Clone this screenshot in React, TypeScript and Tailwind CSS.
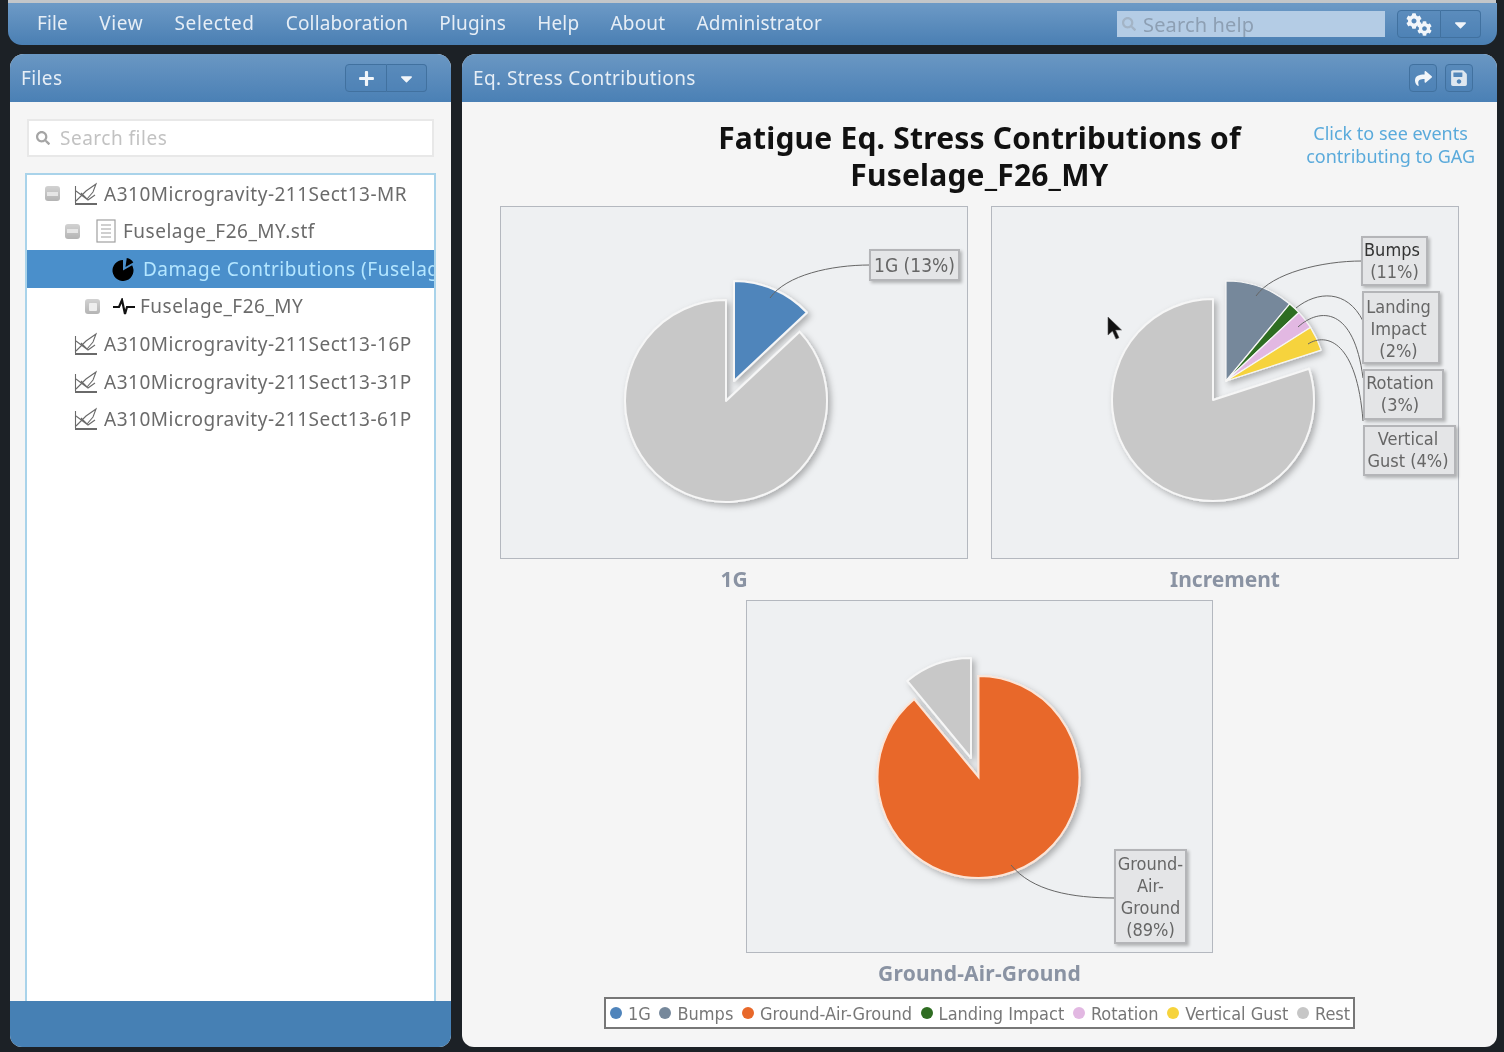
import React from "react";
import { FaCaretDown, FaCog, FaPlus, FaSave, FaSearch, FaShare } from "react-icons/fa";

function slice(cx: number, cy: number, r: number, a0: number, a1: number) {
  const p = (a: number) => {
    const t = (a * Math.PI) / 180;
    return `${(cx + r * Math.sin(t)).toFixed(2)} ${(cy - r * Math.cos(t)).toFixed(2)}`;
  };
  return `M${cx} ${cy}L${p(a0)}A${r} ${r} 0 ${a1 - a0 > 180 ? 1 : 0} 1 ${p(a1)}Z`;
}

const ChartIcon = () => (
  <svg width="24" height="24" viewBox="0 0 24 24" fill="none" stroke="#6a6a6a" strokeWidth="1.1" className="shrink-0">
    <path d="M1.500 4v17" />
    <path d="M1 22h22" strokeWidth="2" />
    <path d="M2 9l12 9 7-5M2 19l10-10 10-7-3 8-6 7-6-6" />
  </svg>
);

const DocIcon = () => (
  <svg width="20" height="24" viewBox="0 0 20 24" fill="none" stroke="#a0a0a0" strokeWidth="1.2" className="shrink-0">
    <rect x="1" y="1" width="18" height="22" />
    <path d="M5 6h10M5 10h10M5 14h10M5 18h10" />
  </svg>
);

const PulseIcon = () => (
  <svg width="22" height="18" viewBox="0 0 22 18" fill="none" stroke="#111" strokeWidth="2.2" className="shrink-0">
    <path d="M0 9h6l3-7 3 14 2-7h8" />
  </svg>
);

const PieIcon = () => (
  <svg width="23" height="24" viewBox="0 0 23 24" className="shrink-0">
    <path d={slice(11, 13.500, 10.500, 60, 360)} fill="#000" />
    <path d={slice(13.500, 10, 9, 8, 60)} fill="#000" />
  </svg>
);

const Expander = ({ plus }: { plus?: boolean }) => (
  <span className="w-[15px] h-[15px] rounded-[3px] bg-gradient-to-b from-[#d2d2d2] to-[#b4b4b4] flex items-center justify-center shrink-0">
    <span className={plus ? "w-[8px] h-[8px] bg-[#eeeeee] rounded-[1px]" : "w-[11px] h-[4px] bg-[#e6e6e6]"} />
  </span>
);

const rows = [
  { cls: "pl-[18px]", box: true, ic: "chart", gap: "gap-[14px]", text: "A310Microgravity-211Sect13-MR", tc: "-ml-[8px]" },
  { cls: "pl-[38px]", box: true, ic: "doc", gap: "gap-[16px]", text: "Fuselage_F26_MY.stf", tc: "-ml-[9px]" },
  { cls: "pl-[85px]", ic: "pie", gap: "", text: "Damage Contributions (Fuselage_F26_MY)", sel: true, tc: "ml-[8px]" },
  { cls: "pl-[58px]", box: true, plus: true, ic: "pulse", gap: "gap-[13px]", text: "Fuselage_F26_MY", tc: "-ml-[8px]" },
  { cls: "pl-[47px]", ic: "chart", gap: "", text: "A310Microgravity-211Sect13-16P", tc: "ml-[6px]" },
  { cls: "pl-[47px]", ic: "chart", gap: "", text: "A310Microgravity-211Sect13-31P", tc: "ml-[6px]" },
  { cls: "pl-[47px]", ic: "chart", gap: "", text: "A310Microgravity-211Sect13-61P", tc: "ml-[6px]" },
];

const headerBtn = "border border-[#41719f] bg-[#4a7fb3]/40 flex items-center justify-center text-[#f2f6fa]";

const Label = ({ cls, children }: { cls: string; children: React.ReactNode }) => (
  <div className={`absolute bg-[#e4e5e7] border-2 border-[#b4b5b8] shadow-[2px_2px_3px_rgba(0,0,0,0.25)] text-center text-[#666] font-['DejaVu_Sans',sans-serif] [font-stretch:condensed] text-[18px] leading-[22px] whitespace-nowrap overflow-hidden ${cls}`}>
    {children}
  </div>
);

const Pie = ({ children }: { children: React.ReactNode }) => (
  <svg className="absolute inset-0" width="100%" height="100%" fill="none">
    <defs>
      <filter id="sh" x="-20%" y="-20%" width="140%" height="140%">
        <feDropShadow dx="3" dy="3" stdDeviation="3" floodColor="#000" floodOpacity="0.28" />
      </filter>
    </defs>
    {children}
  </svg>
);

const s = { stroke: "#f6f6f6", strokeWidth: 2, strokeLinejoin: "round" as const };
const thin = { stroke: "#f6f6f6", strokeWidth: 1.2, strokeLinejoin: "round" as const };
const wire = { stroke: "#666", strokeWidth: 1, fill: "none" };

const legend = [
  ["#4f84bb", "1G"],
  ["#76889b", "Bumps"],
  ["#e8682a", "Ground-Air-Ground"],
  ["#2f6d22", "Landing Impact"],
  ["#e2b8e2", "Rotation"],
  ["#f6d33c", "Vertical Gust"],
  ["#c6c6c6", "Rest"],
];

const menu = [
  { t: "File", c: "" },
  { t: "View", c: "tracking-[0.6px]" },
  { t: "Selected", c: "tracking-[0.6px]" },
  { t: "Collaboration", c: "" },
  { t: "Plugins", c: "" },
  { t: "Help", c: "" },
  { t: "About", c: "" },
  { t: "Administrator", c: "" },
];

export default function App() {
  return (
    <div className="w-[1504px] h-[1052px] overflow-hidden bg-[#1c2126] flex flex-col font-['Noto_Sans',sans-serif] blur-[0.7px]">
      <div className="mx-[8px] h-[3px] shrink-0 bg-[#c3c6c9]" />
      <header className="mx-[8px] w-[1489px] h-[42px] shrink-0 rounded-b-[14px] bg-gradient-to-b from-[#6d9ac6] to-[#4a7fb3] flex items-center pl-[29px] pr-[16px] text-[19px] tracking-[0.15px] text-[#e6eef6]">
        <nav className="flex gap-[31.3px] pb-[2px]">
          {menu.map((m) => (
            <span key={m.t} className={m.c}>{m.t}</span>
          ))}
        </nav>
        <div className="ml-auto w-[268px] h-[26px] bg-[#b4cce5] flex items-center pl-[5px] gap-[7px] text-[#8d9fb3]">
          <FaSearch size={14} className="text-[#a3b4c6]" />
          <span className="text-[20px] pt-[1px]">Search help</span>
        </div>
        <div className="ml-[12px] flex h-[28px]">
          <span className={`${headerBtn} w-[44px] rounded-l-[4px]`}>
            <FaCog size={16} className="-mt-[6px]" />
            <FaCog size={15} className="-ml-[5px] mt-[9px]" />
          </span>
          <span className={`${headerBtn} w-[40px] rounded-r-[4px] border-l-0`}><FaCaretDown size={19} /></span>
        </div>
      </header>

      <main className="mt-[9px] ml-[10px] flex gap-[11px] h-[993px]">
        <section className="w-[441px] flex flex-col rounded-t-[14px] rounded-b-[12px] overflow-hidden bg-[#f5f5f5]">
          <div className="h-[48px] shrink-0 bg-gradient-to-b from-[#6a97c3] to-[#4a80b5] flex items-center pl-[11px] pr-[24px] text-[19px] tracking-[0.4px] text-[#e6eef6]">
            <span>Files</span>
            <div className="ml-auto flex h-[28px]">
              <span className={`${headerBtn} w-[42px] rounded-l-[4px]`}><FaPlus size={17} /></span>
              <span className={`${headerBtn} w-[40px] rounded-r-[4px] border-l-0`}><FaCaretDown size={19} /></span>
            </div>
          </div>
          <div className="flex-1 min-h-0 px-[15px] pt-[17px] flex flex-col">
            <div className="mx-[2px] h-[38px] shrink-0 bg-white border-2 border-[#e8e8e8] flex items-center pl-[7px] gap-[10px] text-[19px] tracking-[0.5px] text-[#c2c2c2]">
              <FaSearch size={14} className="text-[#a5a5a5]" />
              <span>Search files</span>
            </div>
            <div className="mt-[16px] flex-1 min-h-0 border-x-[2px] border-t-[2px] border-[#a9d3ea] bg-white overflow-hidden">
              {rows.map((r) => (
                <div key={r.text} className={`h-[37.6px] flex items-center whitespace-nowrap overflow-hidden text-[19px] tracking-[0.5px] ${r.cls} ${r.gap} ${r.sel ? "bg-[#4a8fcb] text-[#b4e6ff]" : "text-[#6b6b6b]"}`}>
                  {r.box && <Expander plus={r.plus} />}
                  {r.ic === "chart" && <ChartIcon />}
                  {r.ic === "doc" && <DocIcon />}
                  {r.ic === "pulse" && <PulseIcon />}
                  {r.ic === "pie" && <PieIcon />}
                  <span className={r.tc}>{r.text}</span>
                </div>
              ))}
            </div>
          </div>
          <div className="h-[46px] shrink-0 bg-[#4680b4]" />
        </section>

        <section className="w-[1035px] flex flex-col rounded-t-[14px] rounded-b-[12px] overflow-hidden bg-[#f5f5f5]">
          <div className="h-[48px] shrink-0 bg-gradient-to-b from-[#6a97c3] to-[#4a80b5] flex items-center pl-[11px] pr-[24px] text-[19px] text-[#e6eef6]">
            <span className="tracking-[0.4px] pt-[1px]">Eq. Stress Contributions</span>
            <div className="ml-auto flex gap-[8px] h-[28px]">
              <span className={`${headerBtn} w-[28px] rounded-[4px]`}><FaShare size={17} /></span>
              <span className={`${headerBtn} w-[28px] rounded-[4px]`}><FaSave size={18} className="text-[#dfe7ef]" /></span>
            </div>
          </div>

          <div className="flex-1 min-h-0 flex flex-col items-center">
            <div className="w-full h-[104px] shrink-0 grid grid-cols-[1fr_auto_1fr]">
              <div />
              <h1 className="pt-[18px] text-center text-[30px] leading-[36.5px] font-bold tracking-[0.2px] text-[#111]">
                Fatigue Eq. Stress Contributions of<br />Fuselage_F26_MY
              </h1>
              <div className="pt-[20px] pr-[22px] flex justify-end">
                <a className="text-center text-[18px] leading-[23px] text-[#5aaadb]">Click to see events<br />contributing to GAG</a>
              </div>
            </div>

            <div className="flex gap-[23px]">
              <div className="w-[468px] flex flex-col">
                <div className="relative h-[353px] bg-[#eef0f2] border border-[#b4b8bf]">
                  <Pie>
                    <g filter="url(#sh)">
                      <path d={slice(225, 194, 101, 46.8, 360)} fill="#c8c8c8" {...s} />
                      <path d={slice(233, 174, 100, 0, 46.8)} fill="#5085bb" {...s} />
                    </g>
                    <path d="M269 91C285 68 330 58 369 58" {...wire} />
                  </Pie>
                  <Label cls="left-[368px] top-[42px] w-[91px] h-[32px] text-[19px] leading-[28px]">1G (13%)</Label>
                </div>
                <div className="h-[41px] flex items-center justify-center text-[21px] font-bold text-[#8a93a3]">1G</div>
              </div>
              <div className="w-[468px] flex flex-col">
                <div className="relative h-[353px] bg-[#eef0f2] border border-[#b4b8bf]">
                  <Pie>
                    <g filter="url(#sh)">
                      <path d={slice(221, 193, 101, 72, 360)} fill="#c8c8c8" {...s} />
                      <path d={slice(234, 174, 100, 0, 39.6)} fill="#76889b" {...thin} />
                      <path d={slice(234, 174, 100, 39.6, 46.8)} fill="#2f6d22" {...thin} />
                      <path d={slice(234, 174, 100, 46.8, 57.6)} fill="#e2b8e2" {...thin} />
                      <path d={slice(234, 174, 100, 57.6, 72)} fill="#f6d33c" {...thin} />
                    </g>
                    <path d="M264 89C280 66 330 54 370 54" {...wire} />
                    <path d="M304 101C325 84 355 82 371 114" {...wire} />
                    <path d="M306 120C328 100 362 100 371 171" {...wire} />
                    <path d="M316 137C335 125 365 135 371 214" {...wire} />
                  </Pie>
                  <Label cls="left-[369px] top-[29px] w-[67px] h-[50px] pt-[1px]"><span className="block text-left pl-[1px] text-[#333]">Bumps</span>(11%)</Label>
                  <Label cls="left-[370px] top-[84px] w-[78px] h-[73px] pt-[3px] pr-[5px]">Landing<br />Impact<br />(2%)</Label>
                  <Label cls="left-[371px] top-[162px] w-[81px] h-[51px] pt-[1px] pr-[7px]">Rotation<br />(3%)</Label>
                  <Label cls="left-[371px] top-[218px] w-[93px] h-[51px] pt-[1px] pr-[3px]">Vertical<br />Gust (4%)</Label>
                  <svg className="absolute left-[115px] top-[109px]" width="16" height="24" viewBox="0 0 16 24">
                    <path d="M1 1v18l4.5-4 3.5 8 3-1.300-3.500-7.700h6z" fill="#111" stroke="#555" strokeWidth="0.6" />
                  </svg>
                </div>
                <div className="h-[41px] flex items-center justify-center text-[21px] font-bold text-[#8a93a3]">Increment</div>
              </div>
            </div>

            <div className="w-[467px] flex flex-col">
              <div className="relative h-[353px] bg-[#eef0f2] border border-[#b4b8bf]">
                <Pie>
                  <g filter="url(#sh)">
                    <path d={slice(231.5, 176, 101, 0, 320.4)} fill="#e8682a" stroke="#fbe5d8" strokeWidth="2" />
                    <path d={slice(224, 157, 100, 320.4, 360)} fill="#c8c8c8" {...s} />
                  </g>
                  <path d="M264 264C285 290 325 297 368 297" {...wire} />
                </Pie>
                <Label cls="left-[367px] top-[248px] w-[73px] h-[95px] pt-[2px]">Ground-<br />Air-<br />Ground<br />(89%)</Label>
              </div>
              <div className="h-[41px] flex items-center justify-center text-[21px] tracking-[0.2px] font-bold text-[#8a93a3]">Ground-Air-Ground</div>
            </div>

            <div className="mt-[3px] w-[751px] h-[32px] border-2 border-[#777] bg-white flex items-center pl-[4px] gap-[8.6px] text-[18px] text-[#777] font-['DejaVu_Sans',sans-serif] [font-stretch:condensed] whitespace-nowrap">
              {legend.map(([c, t]) => (
                <span key={t} className="flex items-center gap-[6px]">
                  <span className="w-[12px] h-[12px] rounded-full" style={{ backgroundColor: c }} />
                  <span>{t}</span>
                </span>
              ))}
            </div>
          </div>
        </section>
      </main>
    </div>
  );
}
